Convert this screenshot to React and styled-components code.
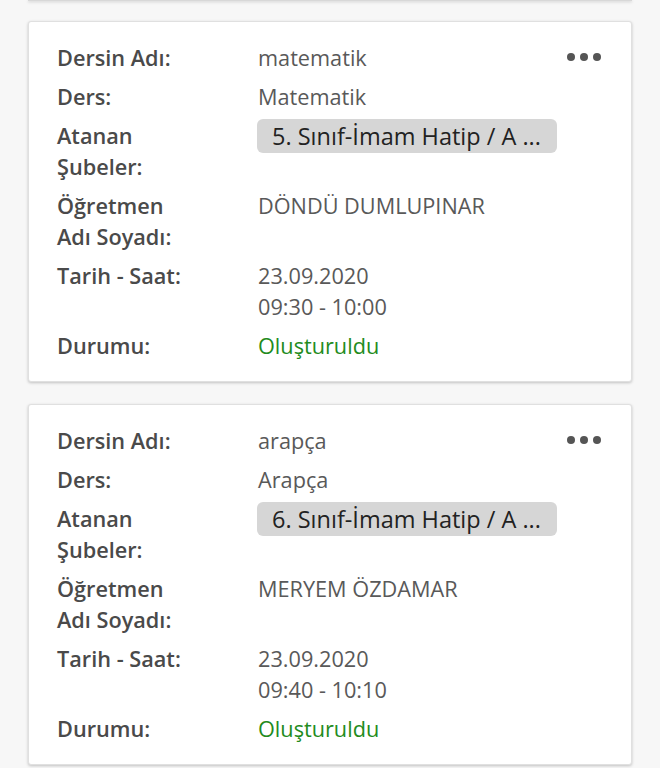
import React from "react";
import styled, { createGlobalStyle } from "styled-components";

const Global = createGlobalStyle`
  html, body { margin: 0; padding: 0; background: #f7f7f7; }
  body { font-family: "Open Sans", "Noto Sans", sans-serif; }
`;

const Page = styled.div`
  width: 660px;
  height: 768px;
  overflow: hidden;
  padding: 0 28px;
  box-sizing: border-box;
  display: flex;
  flex-direction: column;
  gap: 22px;
`;

const PrevEdge = styled.div`
  height: 0;
  margin-bottom: -2px;
  border-bottom: 1px solid #d8d8d8;
  box-shadow: 0 1px 3px rgba(0, 0, 0, 0.25);
`;

const Card = styled.div`
  position: relative;
  background: #fff;
  border: 1px solid #e0e0e0;
  border-radius: 3px;
  box-shadow: 0 1px 3px rgba(0, 0, 0, 0.22);
  padding: 20px 28px 20px 28px;
  display: flex;
  flex-direction: column;
  gap: 8px;
  flex-shrink: 0;
`;

const Row = styled.div`
  display: grid;
  grid-template-columns: 201px 1fr;
  font-size: 21.7px;
  line-height: 31px;
`;

const Label = styled.div`
  color: #4a4a4a;
  font-weight: 600;
`;

const Value = styled.div`
  color: ${(p) => (p.$status ? "#238b1c" : "#595959")};
  font-weight: 400;
`;

const Chip = styled.span`
  display: inline-flex;
  align-items: center;
  height: 34px;
  background: #d6d6d6;
  color: #222;
  border-radius: 6px;
  padding: 0 14px 0 15px;
  font-size: 23.5px;
  line-height: 31px;
  width: 300px;
  box-sizing: border-box;
  white-space: nowrap;
  margin-left: -1px;
  vertical-align: top;
  margin-top: -1px;
`;

const Menu = styled.div`
  position: absolute;
  top: 31px;
  right: 30px;
  display: flex;
  gap: 5px;
`;

const Dot = styled.span`
  width: 8px;
  height: 8px;
  border-radius: 50%;
  background: #555;
`;

const lessons = [
  {
    name: "matematik",
    ders: "Matematik",
    sube: "5. Sınıf-İmam Hatip / A ...",
    teacher: "DÖNDÜ DUMLUPINAR",
    date: "23.09.2020",
    time: "09:30 - 10:00",
  },
  {
    name: "arapça",
    ders: "Arapça",
    sube: "6. Sınıf-İmam Hatip / A ...",
    teacher: "MERYEM ÖZDAMAR",
    date: "23.09.2020",
    time: "09:40 - 10:10",
  },
];

function LessonCard({ l }) {
  return (
    <Card>
      <Menu>
        <Dot />
        <Dot />
        <Dot />
      </Menu>
      <Row>
        <Label>Dersin Adı:</Label>
        <Value>{l.name}</Value>
      </Row>
      <Row>
        <Label>Ders:</Label>
        <Value>{l.ders}</Value>
      </Row>
      <Row>
        <Label>
          Atanan
          <br />
          Şubeler:
        </Label>
        <Value>
          <Chip>{l.sube}</Chip>
        </Value>
      </Row>
      <Row>
        <Label>
          Öğretmen
          <br />
          Adı Soyadı:
        </Label>
        <Value>{l.teacher}</Value>
      </Row>
      <Row>
        <Label>Tarih - Saat:</Label>
        <Value>
          {l.date}
          <br />
          {l.time}
        </Value>
      </Row>
      <Row>
        <Label>Durumu:</Label>
        <Value $status>Oluşturuldu</Value>
      </Row>
    </Card>
  );
}

export default function App() {
  return (
    <>
      <Global />
      <Page>
        <PrevEdge />
        {lessons.map((l) => (
          <LessonCard key={l.name} l={l} />
        ))}
      </Page>
    </>
  );
}
